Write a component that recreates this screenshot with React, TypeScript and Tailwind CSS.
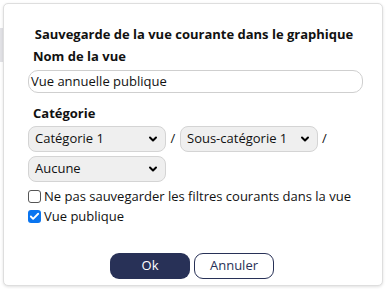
import { Check, ChevronDown } from "lucide-react";

const Select = ({ value }: { value: string }) => (
  <div className="flex items-center justify-between w-[138px] h-[26px] pl-[6px] pr-[6px] rounded-[8px] border border-[#d4d4d4] bg-[#efefef] text-[13px] text-[#111]">
    <span>{value}</span>
    <ChevronDown size={12} strokeWidth={4} className="text-black" />
  </div>
);

const App = () => {
  return (
    <div className="w-[386px] h-[289px] bg-white relative overflow-hidden" style={{ fontFamily: '"Open Sans", sans-serif' }}>
      <div className="absolute left-0 top-[28px] w-[3px] h-[34px] bg-[#e2e2e6]" />
      <div className="absolute left-[3px] top-[3px] w-[380px] h-[283px] bg-white border border-[#dedede] rounded-[5px] shadow-[0_1px_3px_rgba(0,0,0,0.12)] px-[24px] pt-[21px] text-[#111]">
        <h2 className="text-[13px] font-bold text-center leading-[18px] pl-[2px]">
          Sauvegarde de la vue courante dans le graphique
        </h2>
        <div className="mt-[4px] text-[13px] font-bold leading-[18px] pl-[5px]">Nom de la vue</div>
        <div className="mt-[5px] w-[335px] h-[23px] rounded-[10px] border border-[#cfcfcf] flex items-center pl-[2px] text-[13px]">
          Vue annuelle publique
        </div>
        <div className="mt-[11px] text-[13px] font-bold leading-[18px] pl-[5px]">Catégorie</div>
        <div className="mt-[4px] flex items-center">
          <Select value="Catégorie 1" />
          <span className="w-[14px] text-center text-[13px]">/</span>
          <Select value="Sous-catégorie 1" />
          <span className="ml-[4px] text-[13px]">/</span>
        </div>
        <div className="mt-[4px]">
          <Select value="Aucune" />
        </div>
        <label className="mt-[5px] flex items-center gap-[3px] text-[13px] leading-[18px]">
          <span className="w-[13px] h-[13px] rounded-[3px] border border-[#555] bg-white" />
          Ne pas sauvegarder les filtres courants dans la vue
        </label>
        <label className="mt-[2px] flex items-center gap-[3px] text-[13px] leading-[18px]">
          <span className="w-[13px] h-[13px] rounded-[3px] bg-[#0a75f0] flex items-center justify-center">
            <Check size={11} strokeWidth={4} className="text-white" />
          </span>
          Vue publique
        </label>
        <div className="mt-[28px] flex justify-center gap-[4px] pr-[2px]">
          <button className="w-[80px] h-[26px] rounded-[9px] bg-[#283157] text-white text-[13px]">Ok</button>
          <button className="w-[80px] h-[26px] rounded-[9px] border border-[#283157] bg-white text-[#283157] text-[13px]">Annuler</button>
        </div>
      </div>
    </div>
  );
};

export default App;
